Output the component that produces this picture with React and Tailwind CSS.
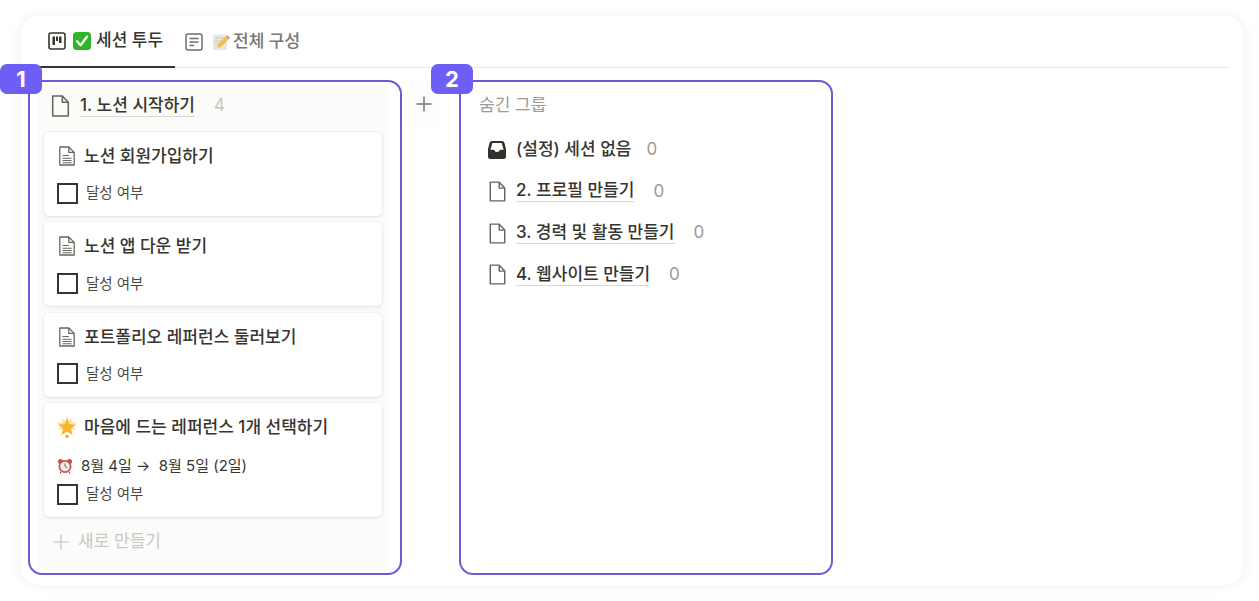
import React from 'react';

const FONT = "font-['Inter','Noto_Sans_CJK_KR',sans-serif]";

const PageIcon = ({ className = 'w-[19px] h-[22px]' }) => (
  <svg viewBox="0 0 20 24" className={className} fill="none" stroke="#66655f" strokeWidth="1.700" strokeLinejoin="round">
    <path d="M1.500 1h10.500l6.500 7v15H1.500z" />
    <path d="M12 1v7h6.500" />
  </svg>
);

const DocIcon = () => (
  <svg viewBox="0 0 20 22" className="w-[18px] h-[20px] shrink-0" fill="none" stroke="#66655f" strokeWidth="1.400" strokeLinejoin="round">
    <path d="M2 1h10l6 6v14H2z" />
    <path d="M12 1v6h6" />
    <path d="M5 10.500h7M5 13.500h10M5 16h10M5 18.500h10" strokeWidth="1.200" />
  </svg>
);

const BoardIcon = () => (
  <svg viewBox="0 0 18 18" className="w-[18px] h-[18px] shrink-0" fill="none">
    <rect x="1" y="1" width="16" height="16" rx="2" stroke="#37352f" strokeWidth="1.600" />
    <path d="M4.500 4.500h2.500v8.500H4.500zM8 4.500h2v4.500H8zM11 4.500h2.500v6.500H11z" fill="#37352f" />
  </svg>
);

const ListIcon = () => (
  <svg viewBox="0 0 18 18" className="w-[18px] h-[18px] shrink-0" fill="none" stroke="#6f6e69" strokeWidth="1.500">
    <rect x="1" y="1" width="16" height="16" rx="2" />
    <path d="M4.500 5.500h9M4.500 9h9M4.500 12.500h4.500" />
  </svg>
);

const CheckEmoji = () => (
  <svg viewBox="0 0 18 18" className="w-[18px] h-[18px] shrink-0">
    <rect width="18" height="18" rx="3.500" fill="#2fb52c" />
    <path d="M4 9.200l3.600 4L14 4.600" fill="none" stroke="#fff" strokeWidth="2.400" strokeLinecap="round" strokeLinejoin="round" />
  </svg>
);

const MemoEmoji = () => (
  <svg viewBox="0 0 18 18" className="w-[18px] h-[18px] shrink-0">
    <rect x="1" y="1.500" width="14" height="15.500" fill="#e9e7e3" />
    <path d="M3 5h10M3 8h8M3 11h5" stroke="#c9c7c2" strokeWidth="1" />
    <path d="M5 15l1-4 8-7.500 3 2.500-8 8z" fill="#f0bf4c" />
    <path d="M14 3.500l3 2.500 1-1.200-3-2.400z" fill="#e0786a" />
  </svg>
);

const StarEmoji = () => (
  <svg viewBox="0 0 20 22" className="w-[20px] h-[22px] shrink-0">
    <path d="M10 0l1.500 5 4-3-1.300 5L20 6l-4 5 3 2-5 .5-4 1-4-1-5-.5 3-2-4-5 5.800 1-1.300-5 4 3z" fill="#f8e3a0" />
    <path d="M10 2.500l2.400 5.600 6.600.6-5 3.900L15.600 19 10 15.800 4.400 19 6 12.600 1 8.700l6.600-.6z" fill="#f9b52f" />
    <circle cx="10" cy="20.300" r="1.600" fill="#f0a020" />
  </svg>
);

const ClockEmoji = () => (
  <svg viewBox="0 0 16 16" className="w-[16px] h-[16px] shrink-0">
    <circle cx="3.500" cy="3.500" r="2.500" fill="#c9504f" />
    <circle cx="12.500" cy="3.500" r="2.500" fill="#c9504f" />
    <path d="M4 14l-1 1.500M12 14l1 1.500" stroke="#8b4a48" strokeWidth="1.200" />
    <circle cx="8" cy="8.500" r="6.500" fill="#c9504f" />
    <circle cx="8" cy="8.500" r="4.800" fill="#f3eeea" />
    <path d="M8 5.500v3l2.300 1.200" stroke="#555" strokeWidth="0.900" fill="none" />
  </svg>
);

const InboxIcon = () => (
  <svg viewBox="0 0 18 18" className="w-[18px] h-[18px] shrink-0">
    <path d="M4 0h10a2.500 2.500 0 0 1 2.400 1.800L18 8v7.500a2.500 2.500 0 0 1-2.500 2.500h-13A2.500 2.500 0 0 1 0 15.500V8l1.600-6.200A2.500 2.500 0 0 1 4 0z" fill="#33322d" />
    <path d="M4.300 2h9.400l1.900 6.700h-3.700a3 3 0 0 1-5.800 0H2.400z" fill="#fff" />
  </svg>
);

const Plus = ({ color }) => (
  <svg viewBox="0 0 16 16" className="w-[16px] h-[16px]" fill="none" stroke={color} strokeWidth="1.500">
    <path d="M8 0.500v15M0.500 8h15" />
  </svg>
);

const Checkbox = () => (
  <div className="flex items-center h-[22px]">
    <span className="w-[21px] h-[21px] border-2 border-[#37352f] shrink-0" />
    <span className="ml-[8px] text-[14.500px] text-[#4a4944]">달성 여부</span>
  </div>
);

const Card = ({ title, icon, date }) => (
  <div className="bg-white rounded-[5px] shadow-[0_0_0_1px_rgba(15,15,15,0.04),0_2px_4px_rgba(15,15,15,0.06)] pl-[13px] pt-[12px] pb-[12px]">
    <div className="flex items-center h-[24px] gap-[7px]">
      <span className="w-[20px] flex justify-center">{icon}</span>
      <span className="text-[17px] font-medium text-[#37352f] leading-[24px]">{title}</span>
    </div>
    {date ? (
      <div className="flex items-center h-[20px] mt-[17px] mb-[7px] text-[15px] text-[#37352f]">
        <ClockEmoji />
        <span className="ml-[8px]">8월 4일 → &nbsp;8월 5일 (2일)</span>
      </div>
    ) : (
      <div className="h-[14px]" />
    )}
    <Checkbox />
  </div>
);

const HiddenRow = ({ icon, label, count, link }) => (
  <div className="flex items-center h-[41.670px] pl-[26px]">
    <span className="w-[20px] flex justify-center">{icon}</span>
    <span className={`ml-[9px] text-[17px] font-medium text-[#37352f] leading-[21px] ${link ? 'border-b border-[#d9d8d5]' : ''}`}>{label}</span>
    <span className={`text-[17px] text-[#9b9a97] ${link ? 'ml-[19px]' : 'ml-[15px]'}`}>{count}</span>
  </div>
);

const Badge = ({ n }) => (
  <div className="absolute -left-[30px] -top-[18px] w-[42px] h-[30px] rounded-[7px] bg-[#6d5ef6] text-white text-[22px] font-bold flex items-center justify-center">
    {n}
  </div>
);

export default function App() {
  return (
    <div className={`${FONT} w-[1259px] h-[601px] bg-white pt-[16px] pl-[21px]`}>
      <div className="w-[1222px] h-[569px] bg-white rounded-[18px] shadow-[0_0_14px_rgba(0,0,0,0.07)] pl-[7px]">
        {/* Tabs */}
        <div className="flex h-[52px] ml-[12px] mr-[15px] border-b border-[#e6e6e4] text-[17px] font-medium">
          <div className="flex items-center gap-[7px] w-[135px] h-[52px] pl-[8px] border-b-2 border-[#37352f] text-[#37352f]">
            <BoardIcon />
            <CheckEmoji />
            <span className="-ml-[2px]">세션 투두</span>
          </div>
          <div className="flex items-center gap-[9px] pl-[10px] text-[#787774]">
            <ListIcon />
            <MemoEmoji />
            <span className="-ml-[6px]">전체 구성</span>
          </div>
        </div>

        {/* Board */}
        <div className="flex mt-[12px]">
          <div className="relative w-[374px] h-[495px] border-2 border-[#6b5bd6] rounded-[14px] px-[8px] pt-[2px]">
            <Badge n="1" />
            <div className="bg-[#fbfbf9] w-[350px] h-[488px] px-[6px]">
              <div className="flex items-center h-[44px] pl-[7px]">
                <PageIcon />
                <span className="ml-[10px] text-[17px] font-medium text-[#37352f] leading-[21px] border-b border-[#d9d8d5]">1. 노션 시작하기</span>
                <span className="ml-[19px] text-[17px] text-[#c7c6c3]">4</span>
              </div>
              <div className="flex flex-col gap-[6.400px] mt-[4px]">
                <Card title="노션 회원가입하기" icon={<DocIcon />} />
                <Card title="노션 앱 다운 받기" icon={<DocIcon />} />
                <Card title="포트폴리오 레퍼런스 둘러보기" icon={<DocIcon />} />
                <Card title="마음에 드는 레퍼런스 1개 선택하기" icon={<StarEmoji />} date />
              </div>
              <div className="flex items-center h-[50px] pl-[9px] text-[17px] text-[#c9c8c5]">
                <Plus color="#cfcecb" />
                <span className="ml-[9px]">새로 만들기</span>
              </div>
            </div>
          </div>

          <div className="w-[57px] pl-[4px] pt-[2px]">
            <div className="w-[36px] h-[44px] bg-[#fdfdfc] flex items-center justify-center">
              <Plus color="#787774" />
            </div>
          </div>

          <div className="relative w-[374px] h-[495px] border-2 border-[#6b5bd6] rounded-[14px] pt-[2px]">
            <Badge n="2" />
            <div className="h-[44px] pl-[18px] flex items-center text-[17px] text-[#9b9a97]">숨긴 그룹</div>
            <div className="mt-[1px]">
              <HiddenRow icon={<InboxIcon />} label="(설정) 세션 없음" count="0" />
              <HiddenRow icon={<PageIcon className="w-[17px] h-[21px]" />} label="2. 프로필 만들기" count="0" link />
              <HiddenRow icon={<PageIcon className="w-[17px] h-[21px]" />} label="3. 경력 및 활동 만들기" count="0" link />
              <HiddenRow icon={<PageIcon className="w-[17px] h-[21px]" />} label="4. 웹사이트 만들기" count="0" link />
            </div>
          </div>
        </div>
      </div>
    </div>
  );
}
